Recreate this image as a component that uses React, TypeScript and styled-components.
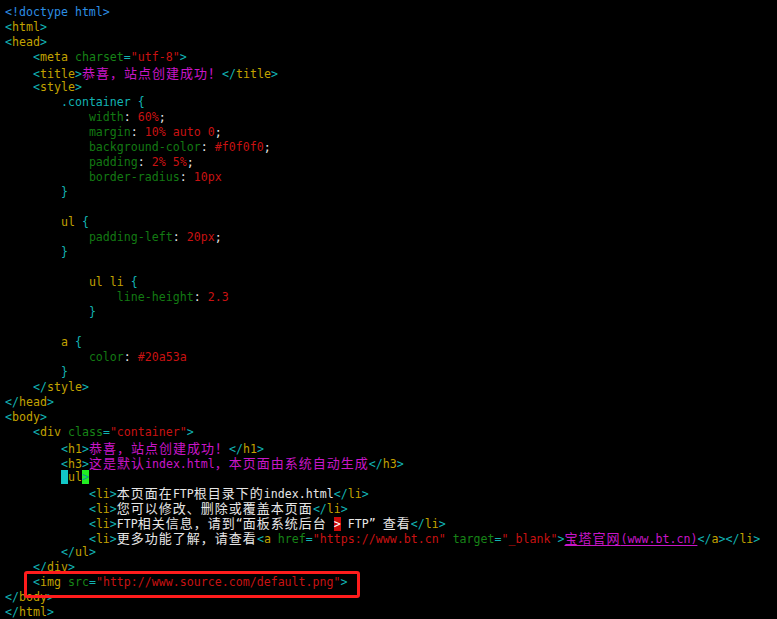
import React from 'react';
import styled, { createGlobalStyle } from 'styled-components';

type Kind =
  | 'doc' | 'p' | 'tag' | 'attr' | 'str' | 'txt' | 'mag'
  | 'prop' | 'val' | 'cur' | 'match' | 'err' | 'link';

type Tok = [Kind, string];

const colors: Record<Kind, string> = {
  doc: '#2c8ee4',
  p: '#12b3b3',
  tag: '#c2a200',
  attr: '#178417',
  str: '#c81212',
  txt: '#e6e6e6',
  mag: '#c816c8',
  prop: '#137a13',
  val: '#c81212',
  cur: '#12c8c8',
  match: '#0a9a9a',
  err: '#ffffff',
  link: '#c816c8',
};

const backgrounds: Partial<Record<Kind, string>> = {
  cur: '#12c8c8',
  match: '#22ee22',
  err: '#cc0a0a',
};

const sp = (n: number): Tok => ['txt', ' '.repeat(n)];
const decl = (indent: number, prop: string, value: string, semi = true): Tok[] => {
  const toks: Tok[] = [sp(indent), ['prop', prop], ['txt', ':'], ['val', ' ' + value]];
  if (semi) toks.push(['txt', ';']);
  return toks;
};
const open = (name: string): Tok[] => [['p', '<'], ['tag', name], ['p', '>']];
const close = (name: string): Tok[] => [['p', '</'], ['tag', name], ['p', '>']];

const lines: Tok[][] = [
  [['doc', '<!doctype html>']],
  open('html'),
  open('head'),
  [sp(4), ['p', '<'], ['tag', 'meta'], ['attr', ' charset'], ['p', '='], ['str', '"utf-8"'], ['p', '>']],
  [sp(4), ...open('title'), ['mag', '恭喜，站点创建成功！'], ...close('title')],
  [sp(4), ...open('style')],
  [sp(8), ['p', '.container {']],
  decl(12, 'width', '60%'),
  decl(12, 'margin', '10% auto 0'),
  decl(12, 'background-color', '#f0f0f0'),
  decl(12, 'padding', '2% 5%'),
  decl(12, 'border-radius', '10px', false),
  [sp(8), ['p', '}']],
  [],
  [sp(8), ['tag', 'ul'], ['p', ' {']],
  decl(12, 'padding-left', '20px'),
  [sp(8), ['p', '}']],
  [],
  [sp(12), ['tag', 'ul li'], ['p', ' {']],
  decl(16, 'line-height', '2.3', false),
  [sp(12), ['p', '}']],
  [],
  [sp(8), ['tag', 'a'], ['p', ' {']],
  decl(12, 'color', '#20a53a', false),
  [sp(8), ['p', '}']],
  [sp(4), ...close('style')],
  close('head'),
  open('body'),
  [sp(4), ['p', '<'], ['tag', 'div'], ['attr', ' class'], ['p', '='], ['str', '"container"'], ['p', '>']],
  [sp(8), ...open('h1'), ['mag', '恭喜，站点创建成功！'], ...close('h1')],
  [sp(8), ...open('h3'), ['mag', '这是默认index.html，本页面由系统自动生成'], ...close('h3')],
  [sp(8), ['cur', '<'], ['tag', 'ul'], ['match', '>']],
  [sp(12), ...open('li'), ['txt', '本页面在FTP根目录下的index.html'], ...close('li')],
  [sp(12), ...open('li'), ['txt', '您可以修改、删除或覆盖本页面'], ...close('li')],
  [sp(12), ...open('li'), ['txt', 'FTP相关信息，请到“面板系统后台 '], ['err', '>'], ['txt', ' FTP” 查看'], ...close('li')],
  [
    sp(12), ...open('li'), ['txt', '更多功能了解，请查看'],
    ['p', '<'], ['tag', 'a'], ['attr', ' href'], ['p', '='], ['str', '"https://www.bt.cn"'],
    ['attr', ' target'], ['p', '='], ['str', '"_blank"'], ['p', '>'],
    ['link', '宝塔官网(www.bt.cn)'], ...close('a'), ...close('li'),
  ],
  [sp(8), ...close('ul')],
  [sp(4), ...close('div')],
  [sp(4), ['p', '<'], ['tag', 'img'], ['attr', ' src'], ['p', '='], ['str', '"http://www.source.com/default.png"'], ['p', '>']],
  close('body'),
  close('html'),
];

const MARKED_LINE = 38;

const GlobalStyle = createGlobalStyle`
  html, body {
    margin: 0;
    padding: 0;
    background: #000;
  }
  #root {
    min-height: 100vh;
    background: #000;
  }
`;

const Screen = styled.div`
  display: flex;
  flex-direction: column;
  padding: 5px 0 0 5px;
  min-height: 100vh;
  box-sizing: border-box;
  background: #000;
  font-family: "DejaVu Sans Mono", "Liberation Mono", monospace;
  font-size: 11.627px;
  color: #e6e6e6;
`;

const Line = styled.div`
  position: relative;
  height: 15px;
  line-height: 15px;
  white-space: pre;
`;

const Span = styled.span<{ $kind: Kind }>`
  color: ${(p) => colors[p.$kind]};
  background: ${(p) => backgrounds[p.$kind] ?? 'transparent'};
  text-decoration: ${(p) => (p.$kind === 'link' ? 'underline' : 'none')};
  text-underline-offset: 2px;
`;

const Cjk = styled.span`
  font-family: "Noto Sans CJK SC", sans-serif;
  font-size: 13px;
  letter-spacing: 1px;
`;

const Marker = styled.div`
  position: absolute;
  left: 19px;
  top: -4px;
  width: 336px;
  height: 27px;
  box-sizing: border-box;
  border: 3px solid #ff1c1c;
  border-radius: 3px;
  pointer-events: none;
  z-index: 1;
`;

const CJK_RE = /([\u3000-\u303f\u3400-\u9fff\uff00-\uffef]+)/;

function renderText(text: string) {
  return text.split(CJK_RE).map((part, i) =>
    i % 2 === 1 ? <Cjk key={i}>{part}</Cjk> : part
  );
}

export default function App() {
  return (
    <>
      <GlobalStyle />
      <Screen>
        {lines.map((toks, li) => (
          <Line key={li}>
            {toks.length === 0 ? ' ' : toks.map(([kind, text], ti) => (
              <Span key={ti} $kind={kind}>{renderText(text)}</Span>
            ))}
            {li === MARKED_LINE && <Marker />}
          </Line>
        ))}
      </Screen>
    </>
  );
}
